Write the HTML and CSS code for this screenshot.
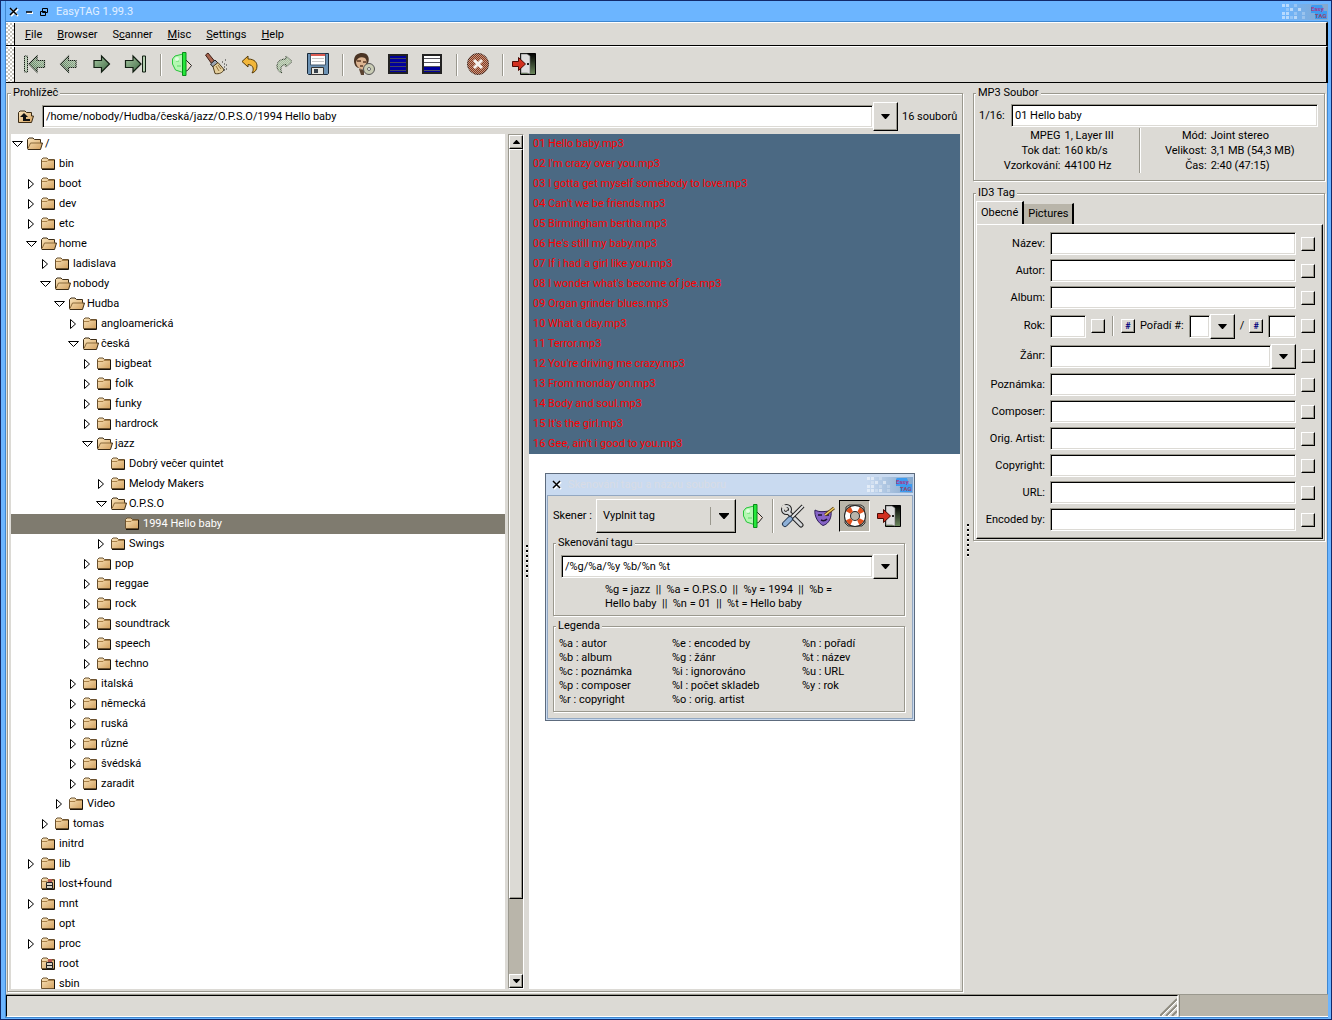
FILE: index.html
```html
<!DOCTYPE html>
<html lang="cs">
<head>
<meta charset="utf-8">
<title>EasyTAG 1.99.3</title>
<link rel="stylesheet" href="styles.css">
</head>
<body>
<svg class="defs" aria-hidden="true">
  <defs>
    <linearGradient id="g-folder" x1="0" y1="0" x2="1" y2="1"><stop offset="0" stop-color="#fbe6bd"/><stop offset="1" stop-color="#d3a15f"/></linearGradient>
    <linearGradient id="g-arrow" x1="0" y1="0" x2="1" y2="1"><stop offset="0" stop-color="#a9c9a4"/><stop offset="1" stop-color="#3f6b44"/></linearGradient>
    <linearGradient id="g-door" x1="0" y1="0" x2="0" y2="1"><stop offset="0" stop-color="#000"/><stop offset="1" stop-color="#6d8a5e"/></linearGradient>
    <pattern id="stipple" width="2" height="2" patternUnits="userSpaceOnUse"><path d="M0 0h1v1H0zM1 1h1v1H1z" fill="#dcdad5"/></pattern>
  </defs>
  <symbol id="i-closed" viewBox="0 0 16 16"><path d="M.5 12.500V3.500L2 2h4l1.500 1.500h6v9z" fill="url(#g-folder)" stroke="#6b5230"/><path d="M13.500 4v9.500H1" fill="none" stroke="#1c140a"/><path d="M1 5.500h5l1-1h6" fill="none" stroke="#a98048"/></symbol>
  <symbol id="i-open" viewBox="0 0 16 16"><path d="M.5 12.500V3.500L2 2h4l1.500 1.500h6V7h2l-2 6.500H1z" fill="url(#g-folder)" stroke="#3c2c16"/><path d="M1 12.500L3.500 7H14" fill="none" stroke="#8a6a3a"/></symbol>
  <symbol id="i-locked" viewBox="0 0 16 16"><use href="#i-closed"/><path d="M7 3h4v10H7z" fill="#b5564e"/><path d="M5.500 6.500h6v6h-6zM6 9.500h5" fill="#d9d4c8" stroke="#222"/></symbol>
  <symbol id="i-right" viewBox="0 0 16 16"><path d="M3.500 3.500v9L8.500 8z" fill="#fff" stroke="#000"/></symbol>
  <symbol id="i-down" viewBox="0 0 16 16"><path d="M1.500 5.500h10L6.500 10.500z" fill="#fff" stroke="#000"/></symbol>
  <symbol id="i-tri" viewBox="0 0 10 6"><path d="M0 0h10v1L5.500 6h-1L0 1z" fill="#000"/></symbol>
  <symbol id="i-arrow" viewBox="0 0 24 24"><path d="M4 8.500h7.500V4l8 8-8 8v-4.500H4z" fill="url(#g-arrow)" stroke="#111e12" stroke-width="1.200"/></symbol>
  <symbol id="i-end" viewBox="0 0 24 24"><path d="M1.500 8.500h7.500V4l8 8-8 8v-4.500H1.500z" fill="url(#g-arrow)" stroke="#111e12" stroke-width="1.200"/><path d="M18.500 4h3v16h-3z" fill="#b4cfb0" stroke="#111e12"/></symbol>
  <symbol id="i-scan" viewBox="0 0 24 24"><path d="M15 7l6.500 6.500-4 5-3 1z" fill="#f1ddd0" stroke="#222"/><path d="M13 2L5 4 2.500 7v5l3 6 7.500 2.500z" fill="#b4f7b2" stroke="#27c43a"/><path d="M6 9h3M7 14h4" stroke="#5bd866" fill="none"/><path d="M12.500.5h3.500v23h-3.500z" fill="#25e83a" stroke="#0b8a1b"/><circle cx="7" cy="7" r="2" fill="#e2ffe0"/></symbol>
  <symbol id="i-broom" viewBox="0 0 24 24"><path d="M1.500 3L4 1l6.500 8-3 2.500z" fill="#a8644e" stroke="#3d1d14"/><path d="M6.500 12l4.500-4 3 3-5 4z" fill="#9aa4b0" stroke="#222"/><path d="M9 14.500l5-4 6 7c-1 3-5 5-9 4z" fill="#e3cd9a" stroke="#4f3d1c"/><path d="M12 14l3 5M14 13l3 4" stroke="#94733c"/><path d="M18 10h1M20 12h1M21 8h1M20 15h1M22 17h1M19 18h2M22 13h1" stroke="#222"/></symbol>
  <symbol id="i-undo" viewBox="0 0 24 24"><path d="M4 9.500L10 4v3c7 0 9 4 9 7 0 4-2 6-5 7 2-3 2-8-4-8.500V15z" fill="#f2b63a" stroke="#553a06"/></symbol>
  <symbol id="i-redo" viewBox="0 0 24 24"><path d="M20 9.500L14 4v3c-7 0-9 4-9 7 0 4 2 6 5 7-2-3-2-8 4-8.500V15z" fill="#a9c2a0" stroke="#2c3c28"/></symbol>
  <symbol id="i-save" viewBox="0 0 24 24"><path d="M1.500 1.500h21v20l-1 1h-19l-1-1z" fill="#6d93b5" stroke="#182838"/><path d="M4.500 2h15v11h-15z" fill="#fff" stroke="#45596c"/><path d="M5 2h14v2H5z" fill="#db5b52"/><path d="M6 6.500h12M6 9.500h12" stroke="#c6c6c6"/><path d="M5.500 15.500h12v7h-12z" fill="#e6e6e0" stroke="#333"/><path d="M8 17h4v4H8z" fill="#38424c"/></symbol>
  <symbol id="i-face" viewBox="0 0 24 24"><path d="M2 9C2 3 6 1 10 1c6 0 8 5 6 10-2 6-6 8-9 5-3 0-5-4-5-7z" fill="#4a3424"/><path d="M4 10c1-4 5-6 9-4 3 3 1 8-2 11-3 1-7-3-7-7z" fill="#dcb491"/><path d="M5 9h4M11 10h3M8 14h3" stroke="#5c3a26" stroke-width="1.500"/><path d="M7 17l5 1v5H9z" fill="#5b4330"/><circle cx="17" cy="17" r="5.500" fill="#c9ccb4" stroke="#555"/><circle cx="17" cy="17" r="1.500" fill="#fff" stroke="#666"/></symbol>
  <symbol id="i-all" viewBox="0 0 24 24"><path d="M3 3h18v18H3z" fill="#00009c" stroke="#222" stroke-width="2"/><path d="M4 6.500h16M4 10.500h16M4 14.500h16M4 18.500h16" stroke="#45455e"/></symbol>
  <symbol id="i-invert" viewBox="0 0 24 24"><path d="M3 3h18v18H3z" fill="#fff" stroke="#222" stroke-width="2"/><path d="M4 14h16v6H4z" fill="#00009c"/><path d="M4 6.500h16M4 10.500h16M4 14.500h16M4 18.500h16" stroke="#55555e"/></symbol>
  <symbol id="i-stop" viewBox="0 0 24 24"><circle cx="12" cy="12" r="10.500" fill="#8e3818" stroke="#3d1c12"/><circle cx="12" cy="12" r="11" fill="url(#stipple)" opacity=".6"/><path d="M8 8l8 8M16 8l-8 8" stroke="#f4f0ec" stroke-width="3"/></symbol>
  <symbol id="i-exit" viewBox="0 0 24 24"><path d="M8.500 1.500h15v21h-15z" fill="url(#g-door)" stroke="#000"/><path d="M9 2h6l3 2v18l-3-1H9z" fill="#dedede" stroke="#666" stroke-width=".6"/><path d="M15 12h2" stroke="#222" stroke-width="2"/><path d="M.5 9.500h6V5.500l7 6.500-7 6.500v-4h-6z" fill="#d2301f" stroke="#4c0903"/></symbol>
  <symbol id="i-tools" viewBox="0 0 24 24"><path d="M7 8l13 13" stroke="#222" stroke-width="5" stroke-linecap="round"/><circle cx="5.500" cy="5.500" r="3.500" fill="none" stroke="#222" stroke-width="4"/><path d="M7 8l13 13" stroke="#d5d8da" stroke-width="3" stroke-linecap="round"/><circle cx="5.500" cy="5.500" r="3.500" fill="none" stroke="#d5d8da" stroke-width="2"/><path d="M0 3l3-3 4 5-2 2z" fill="#dcdad5"/><path d="M22 2L10 14" stroke="#222" stroke-width="4"/><path d="M22 2L10 14" stroke="#e6e6e6" stroke-width="2"/><path d="M9 15l-5 5" stroke="#23364f" stroke-width="6" stroke-linecap="round"/><path d="M9 15l-5 5" stroke="#8db0d8" stroke-width="4" stroke-linecap="round"/></symbol>
  <symbol id="i-mask" viewBox="0 0 24 24"><path d="M3 6c5 3 11 1 16 1 1 6-2 13-8 14.500C6 19 2 12 3 6z" fill="#8664c6" stroke="#2d1b57"/><path d="M6 11h4M13 11h4M9 16c2 1 4 1 6-1" stroke="#1c1030" stroke-width="1.500" fill="none"/><path d="M13 11L22 4" stroke="#5e4212" stroke-width="3"/><path d="M13 11L22 4" stroke="#f3cf62" stroke-width="1.500"/></symbol>
  <symbol id="i-help" viewBox="0 0 24 24"><path d="M3 3l3-2 12 0 3 2 1 16-3 3H5l-3-3z" fill="none" stroke="#333"/><circle cx="12" cy="12" r="7.500" fill="none" stroke="#222" stroke-width="7"/><circle cx="12" cy="12" r="7.500" fill="none" stroke="#fff" stroke-width="5"/><circle cx="12" cy="12" r="7.500" fill="none" stroke="#e2501c" stroke-width="5" stroke-dasharray="4.780 7" stroke-dashoffset="-3.500"/></symbol>
  <symbol id="i-up" viewBox="0 0 18 18"><path d="M1.500 14.500v-10L3 3h5l1.500 1.500h5V8h2l-2 6.500z" fill="url(#g-folder)" stroke="#3c2c16"/><path d="M7 5l4 4H9v2h4v2H6V9H3z" fill="#111"/></symbol>
  <symbol id="i-dots" viewBox="0 0 24 16"><path d="M0 0h3v3H0zM4 0h3v3H4zM8 4h3v3H8zM0 8h3v3H0zM4 8h3v3H4zM16 4h3v3h-3zM0 12h3v3H0zM4 12h3v3H4zM12 12h3v3h-3z" fill="#fff" opacity=".5"/><path d="M4 4h3v3H4zM12 8h3v3h-3zM8 12h3v3H8zM20 12h3v3h-3zM12 0h3v3h-3zM20 8h3v3h-3z" fill="#fff" opacity=".25"/></symbol>
</svg>

<div class="window">
  <header class="title">
    <svg width="40" height="10" viewBox="0 0 40 10" aria-hidden="true"><path d="M2 2l7 7M9 2L2 9M18 6h6" stroke="#fff" stroke-width="2"/><path d="M1 1l7 7M8 1L1 8M17 5h6" stroke="#000" stroke-width="1.500"/><path d="M33.500 1.500h5v4h-5zM31.500 4.500h5v4h-5z" fill="#6cb5ff" stroke="#000"/></svg>
    <span class="title-text">EasyTAG 1.99.3</span>
    <span class="title-end"><svg width="24" height="16"><use href="#i-dots"/></svg><svg class="logo" viewBox="0 0 18 16" aria-hidden="true"><path d="M2 1h10l2 6h3v8H5V9H1V2z" fill="#3d9bf0"/><text x="1" y="7" fill="#a83a8c">Easy</text><text x="5" y="14" fill="#8e4a72">TAG</text></svg></span>
  </header>

  <nav class="bar menu">
    <span class="grip"></span>
    <button><u>F</u>ile</button><button><u>B</u>rowser</button><button>S<u>c</u>anner</button><button><u>M</u>isc</button><button><u>S</u>ettings</button><button><u>H</u>elp</button>
  </nav>

  <div class="bar tools">
    <span class="grip"></span>
    <button class="tool off" aria-label="First"><svg class="flip"><use href="#i-end"/></svg></button>
    <button class="tool off" aria-label="Previous"><svg class="flip"><use href="#i-arrow"/></svg></button>
    <button class="tool" aria-label="Next"><svg><use href="#i-arrow"/></svg></button>
    <button class="tool" aria-label="Last"><svg><use href="#i-end"/></svg></button>
    <span class="sep"></span>
    <button class="tool" aria-label="Scan"><svg><use href="#i-scan"/></svg></button>
    <button class="tool" aria-label="Clear"><svg><use href="#i-broom"/></svg></button>
    <button class="tool" aria-label="Undo"><svg><use href="#i-undo"/></svg></button>
    <button class="tool off" aria-label="Redo"><svg><use href="#i-redo"/></svg></button>
    <button class="tool" aria-label="Save"><svg><use href="#i-save"/></svg></button>
    <span class="sep"></span>
    <button class="tool" aria-label="Artist and album view"><svg><use href="#i-face"/></svg></button>
    <button class="tool" aria-label="Select all"><svg><use href="#i-all"/></svg></button>
    <button class="tool" aria-label="Invert selection"><svg><use href="#i-invert"/></svg></button>
    <span class="sep"></span>
    <button class="tool" aria-label="Stop"><svg><use href="#i-stop"/></svg></button>
    <span class="sep"></span>
    <button class="tool" aria-label="Quit"><svg><use href="#i-exit"/></svg></button>
  </div>

  <main class="content">
    <fieldset class="frame browser">
      <legend>Prohlížeč</legend>
      <div class="path">
        <button class="plain" aria-label="Parent folder"><svg width="18" height="18"><use href="#i-up"/></svg></button>
        <input class="entry grow" aria-label="Path" value="/home/nobody/Hudba/česká/jazz/O.P.S.O/1994 Hello baby">
        <button class="drop tall" aria-label="Recent folders"><svg><use href="#i-tri"/></svg></button>
        <span class="count">16 souborů</span>
      </div>
      <div class="panes">
        <ul class="tree">
          <li class="l0"><svg><use href="#i-down"/></svg><svg><use href="#i-open"/></svg>/</li>
          <li class="l1"><svg></svg><svg><use href="#i-closed"/></svg>bin</li>
          <li class="l1"><svg><use href="#i-right"/></svg><svg><use href="#i-closed"/></svg>boot</li>
          <li class="l1"><svg><use href="#i-right"/></svg><svg><use href="#i-closed"/></svg>dev</li>
          <li class="l1"><svg><use href="#i-right"/></svg><svg><use href="#i-closed"/></svg>etc</li>
          <li class="l1"><svg><use href="#i-down"/></svg><svg><use href="#i-open"/></svg>home</li>
          <li class="l2"><svg><use href="#i-right"/></svg><svg><use href="#i-closed"/></svg>ladislava</li>
          <li class="l2"><svg><use href="#i-down"/></svg><svg><use href="#i-open"/></svg>nobody</li>
          <li class="l3"><svg><use href="#i-down"/></svg><svg><use href="#i-open"/></svg>Hudba</li>
          <li class="l4"><svg><use href="#i-right"/></svg><svg><use href="#i-closed"/></svg>angloamerická</li>
          <li class="l4"><svg><use href="#i-down"/></svg><svg><use href="#i-open"/></svg>česká</li>
          <li class="l5"><svg><use href="#i-right"/></svg><svg><use href="#i-closed"/></svg>bigbeat</li>
          <li class="l5"><svg><use href="#i-right"/></svg><svg><use href="#i-closed"/></svg>folk</li>
          <li class="l5"><svg><use href="#i-right"/></svg><svg><use href="#i-closed"/></svg>funky</li>
          <li class="l5"><svg><use href="#i-right"/></svg><svg><use href="#i-closed"/></svg>hardrock</li>
          <li class="l5"><svg><use href="#i-down"/></svg><svg><use href="#i-open"/></svg>jazz</li>
          <li class="l6"><svg></svg><svg><use href="#i-closed"/></svg>Dobrý večer quintet</li>
          <li class="l6"><svg><use href="#i-right"/></svg><svg><use href="#i-closed"/></svg>Melody Makers</li>
          <li class="l6"><svg><use href="#i-down"/></svg><svg><use href="#i-open"/></svg>O.P.S.O</li>
          <li class="l7 selected"><svg></svg><svg><use href="#i-closed"/></svg>1994 Hello baby</li>
          <li class="l6"><svg><use href="#i-right"/></svg><svg><use href="#i-closed"/></svg>Swings</li>
          <li class="l5"><svg><use href="#i-right"/></svg><svg><use href="#i-closed"/></svg>pop</li>
          <li class="l5"><svg><use href="#i-right"/></svg><svg><use href="#i-closed"/></svg>reggae</li>
          <li class="l5"><svg><use href="#i-right"/></svg><svg><use href="#i-closed"/></svg>rock</li>
          <li class="l5"><svg><use href="#i-right"/></svg><svg><use href="#i-closed"/></svg>soundtrack</li>
          <li class="l5"><svg><use href="#i-right"/></svg><svg><use href="#i-closed"/></svg>speech</li>
          <li class="l5"><svg><use href="#i-right"/></svg><svg><use href="#i-closed"/></svg>techno</li>
          <li class="l4"><svg><use href="#i-right"/></svg><svg><use href="#i-closed"/></svg>italská</li>
          <li class="l4"><svg><use href="#i-right"/></svg><svg><use href="#i-closed"/></svg>německá</li>
          <li class="l4"><svg><use href="#i-right"/></svg><svg><use href="#i-closed"/></svg>ruská</li>
          <li class="l4"><svg><use href="#i-right"/></svg><svg><use href="#i-closed"/></svg>různé</li>
          <li class="l4"><svg><use href="#i-right"/></svg><svg><use href="#i-closed"/></svg>švédská</li>
          <li class="l4"><svg><use href="#i-right"/></svg><svg><use href="#i-closed"/></svg>zaradit</li>
          <li class="l3"><svg><use href="#i-right"/></svg><svg><use href="#i-closed"/></svg>Video</li>
          <li class="l2"><svg><use href="#i-right"/></svg><svg><use href="#i-closed"/></svg>tomas</li>
          <li class="l1"><svg></svg><svg><use href="#i-closed"/></svg>initrd</li>
          <li class="l1"><svg><use href="#i-right"/></svg><svg><use href="#i-closed"/></svg>lib</li>
          <li class="l1"><svg></svg><svg><use href="#i-locked"/></svg>lost+found</li>
          <li class="l1"><svg><use href="#i-right"/></svg><svg><use href="#i-closed"/></svg>mnt</li>
          <li class="l1"><svg></svg><svg><use href="#i-closed"/></svg>opt</li>
          <li class="l1"><svg><use href="#i-right"/></svg><svg><use href="#i-closed"/></svg>proc</li>
          <li class="l1"><svg></svg><svg><use href="#i-locked"/></svg>root</li>
          <li class="l1"><svg></svg><svg><use href="#i-closed"/></svg>sbin</li>
        </ul>
        <div class="scroll">
          <button aria-label="Scroll up"><svg class="turn"><use href="#i-tri"/></svg></button>
          <span class="thumb"></span>
          <span class="trough"></span>
          <button aria-label="Scroll down"><svg><use href="#i-tri"/></svg></button>
        </div>
        <div class="splitter inner"></div>
        <div class="files">
          <ol>
            <li>01 Hello baby.mp3</li><li>02 I'm crazy over you.mp3</li><li>03 I gotta get myself somebody to love.mp3</li><li>04 Can't we be friends.mp3</li><li>05 Birmingham bertha.mp3</li><li>06 He's still my baby.mp3</li><li>07 If i had a girl like you.mp3</li><li>08 I wonder what's become of joe.mp3</li><li>09 Organ grinder blues.mp3</li><li>10 What a day.mp3</li><li>11 Terror.mp3</li><li>12 You're driving me crazy.mp3</li><li>13 From monday on.mp3</li><li>14 Body and soul.mp3</li><li>15 It's the girl.mp3</li><li>16 Gee, ain't i good to you.mp3</li>
          </ol>
          <section class="dialog" aria-label="Skenování tagu a názvu souboru">
            <header class="dialog-title">
              <svg width="10" height="10" viewBox="0 0 10 10" aria-hidden="true"><path d="M2 2l7 7M9 2L2 9" stroke="#fff" stroke-width="2"/><path d="M1 1l7 7M8 1L1 8" stroke="#000" stroke-width="1.500"/></svg>
              <span class="dialog-name">Skenování tagu a názvu souboru</span>
              <span class="title-end"><svg width="24" height="16"><use href="#i-dots"/></svg><svg class="logo" viewBox="0 0 18 16" aria-hidden="true"><path d="M2 1h10l2 6h3v8H5V9H1V2z" fill="#3d9bf0"/><text x="1" y="7" fill="#a83a8c">Easy</text><text x="5" y="14" fill="#8e4a72">TAG</text></svg></span>
            </header>
            <div class="dialog-body">
              <div class="scanner">
                <span class="scanner-label">Skener :</span>
                <button class="combo"><span>Vyplnit tag</span><svg><use href="#i-tri"/></svg></button>
                <button class="tool" aria-label="Scan"><svg><use href="#i-scan"/></svg></button>
                <span class="rule"></span>
                <button class="tool" aria-label="Options"><svg><use href="#i-tools"/></svg></button>
                <button class="tool" aria-label="Mask editor"><svg><use href="#i-mask"/></svg></button>
                <button class="tool pressed" aria-label="Legend"><svg><use href="#i-help"/></svg></button>
                <button class="tool last" aria-label="Close"><svg><use href="#i-exit"/></svg></button>
              </div>
              <fieldset class="frame scan">
                <legend>Skenování tagu</legend>
                <div class="mask">
                  <input class="entry grow" aria-label="Mask" value="/%g/%a/%y %b/%n %t">
                  <button class="drop" aria-label="Masks"><svg><use href="#i-tri"/></svg></button>
                </div>
                <p>%g = jazz &nbsp;|| &nbsp;%a = O.P.S.O &nbsp;|| &nbsp;%y = 1994 &nbsp;|| &nbsp;%b =<br>Hello baby &nbsp;|| &nbsp;%n = 01 &nbsp;|| &nbsp;%t = Hello baby</p>
              </fieldset>
              <fieldset class="frame legend">
                <legend>Legenda</legend>
                <div class="codes">
                  <div>%a : autor<br>%b : album<br>%c : poznámka<br>%p : composer<br>%r : copyright</div>
                  <div>%e : encoded by<br>%g : žánr<br>%i : ignorováno<br>%l : počet skladeb<br>%o : orig. artist</div>
                  <div>%n : pořadí<br>%t : název<br>%u : URL<br>%y : rok</div>
                </div>
              </fieldset>
            </div>
          </section>
        </div>
      </div>
    </fieldset>

    <div class="splitter"></div>

    <aside class="side">
      <fieldset class="frame">
        <legend>MP3 Soubor</legend>
        <div class="file-row">
          <label for="fname">1/16:</label>
          <input class="entry grow" id="fname" value="01 Hello baby">
        </div>
        <div class="info">
          <dl><dt>MPEG</dt><dd>1, Layer III</dd><dt>Tok dat:</dt><dd>160 kb/s</dd><dt>Vzorkování:</dt><dd>44100 Hz</dd></dl>
          <span class="rule"></span>
          <dl class="wide"><dt>Mód:</dt><dd>Joint stereo</dd><dt>Velikost:</dt><dd>3,1 MB (54,3 MB)</dd><dt>Čas:</dt><dd>2:40 (47:15)</dd></dl>
        </div>
      </fieldset>

      <fieldset class="frame tag">
        <legend>ID3 Tag</legend>
        <div class="tabs"><button class="tab current">Obecné</button><button class="tab">Pictures</button></div>
        <div class="form">
          <div class="row"><label for="t1">Název:</label><input class="entry grow" id="t1"><button class="mini" aria-label="Apply Název"></button></div>
          <div class="row"><label for="t2">Autor:</label><input class="entry grow" id="t2"><button class="mini" aria-label="Apply Autor"></button></div>
          <div class="row"><label for="t3">Album:</label><input class="entry grow" id="t3"><button class="mini" aria-label="Apply Album"></button></div>
          <div class="row high">
            <label for="t4">Rok:</label><input class="entry year" id="t4"><button class="mini" aria-label="Apply Rok"></button>
            <span class="rule"></span>
            <button class="mini" aria-label="Number tracks">#</button>
            <label class="track" for="t5">Pořadí #:</label>
            <span class="joined"><input class="entry num" id="t5"><button class="drop" aria-label="Tracks"><svg><use href="#i-tri"/></svg></button></span>
            <span>/</span><button class="mini" aria-label="Count tracks">#</button>
            <input class="entry grow" aria-label="Total"><button class="mini" aria-label="Apply Pořadí"></button>
          </div>
          <div class="row high"><label for="t6">Žánr:</label><span class="joined grow"><input class="entry grow" id="t6"><button class="drop" aria-label="Genres"><svg><use href="#i-tri"/></svg></button></span><button class="mini" aria-label="Apply Žánr"></button></div>
          <div class="row"><label for="t7">Poznámka:</label><input class="entry grow" id="t7"><button class="mini" aria-label="Apply Poznámka"></button></div>
          <div class="row"><label for="t8">Composer:</label><input class="entry grow" id="t8"><button class="mini" aria-label="Apply Composer"></button></div>
          <div class="row"><label for="t9">Orig. Artist:</label><input class="entry grow" id="t9"><button class="mini" aria-label="Apply Orig. Artist"></button></div>
          <div class="row"><label for="t10">Copyright:</label><input class="entry grow" id="t10"><button class="mini" aria-label="Apply Copyright"></button></div>
          <div class="row"><label for="t11">URL:</label><input class="entry grow" id="t11"><button class="mini" aria-label="Apply URL"></button></div>
          <div class="row"><label for="t12">Encoded by:</label><input class="entry grow" id="t12"><button class="mini" aria-label="Apply Encoded by"></button></div>
        </div>
      </fieldset>
    </aside>
  </main>

  <footer class="status">
    <span class="message"><svg width="17" height="18" viewBox="0 0 17 18" aria-hidden="true"><path d="M0 18L17 1M6 18L17 7M12 18l5-5" stroke="#8e8b80" stroke-width="2"/><path d="M2 18L17 3M8 18l9-9" stroke="#fff"/></svg></span>
    <span class="progress"></span>
  </footer>
</div>
</body>
</html>
```
FILE: styles.css
```css
:root {
  --bg: #dcdad5;
  --dark: #9a988e;
  --trough: #b9b5aa;
  --blue: #6cb5ff;
}
* { box-sizing: border-box; }
body {
  margin: 0;
  font: 11px/14px Roboto, "Liberation Sans", sans-serif;
  color: #000;
  background: var(--bg);
}
button, input { font: inherit; color: inherit; margin: 0; padding: 0; border-radius: 0; }
button { background: none; border: 0; }
ul, ol, dl, dd, p { margin: 0; padding: 0; list-style: none; }
.defs { position: absolute; width: 0; height: 0; }
.grow { flex: 1; min-width: 0; }

.window {
  display: flex;
  flex-direction: column;
  height: 100vh;
  border: solid var(--blue);
  border-width: 0 4px 2px 5px;
  box-shadow: inset 1px 0 #3f87d0, inset -1px -1px #3f87d0;
  outline: 1px solid #12296b;
  outline-offset: -1px;
  padding: 0 0 1px 1px;
}
.title {
  display: flex;
  align-items: center;
  flex: none;
  height: 22px;
  padding: 2px 0 0 3px;
  background: var(--blue);
  border-top: 1px solid #c4e2ff;
  border-bottom: 1px solid #3f87d0;
}
.title-text { margin-left: 7px; color: #e2f0ff; }
.title-end { display: flex; align-items: center; gap: 4px; margin-left: auto; height: 16px; background: linear-gradient(90deg, transparent, #86a8cc); }
.logo { width: 18px; height: 16px; overflow: visible; font-size: 6px; font-weight: 700; }

.bar {
  display: flex;
  align-items: stretch;
  flex: none;
  border-top: 1px solid #fff;
  border-bottom: 1px solid #000;
  border-right: 2px solid #000;
}
.grip {
  width: 9px;
  margin-right: 2px;
  border-right: 1px solid #000;
  background: repeating-conic-gradient(#fff 0 25%, #c8c5bd 0 50%) 0 0 / 4px 4px;
}
.menu { height: 24px; gap: 1px; }
.menu button { padding: 1px 7px 0; }
.tools { height: 37px; }
.tool { display: grid; place-items: center; width: 34px; }
.tool svg { width: 24px; height: 24px; }
.tools .tool { padding-bottom: 1px; }
.off svg {
  -webkit-mask: repeating-conic-gradient(#000 0 25%, rgba(0, 0, 0, .35) 0 50%) 0 0 / 2px 2px;
  mask: repeating-conic-gradient(#000 0 25%, rgba(0, 0, 0, .35) 0 50%) 0 0 / 2px 2px;
}
.flip { transform: scaleX(-1); }
.turn { transform: rotate(180deg); }
.sep { width: 12px; background: linear-gradient(90deg, var(--dark) 50%, #fff 50%) 7px 50% / 2px 22px no-repeat; }

.content { flex: 1; min-height: 0; display: flex; padding: 3px 3px 0 1px; }
.frame {
  min-width: 0;
  margin: 0;
  padding: 0;
  border: 1px solid var(--dark);
  box-shadow: 1px 1px 0 #fff, inset 1px 1px 0 #fff;
}
.frame > legend { margin-left: 2px; padding: 0 2px; background: var(--bg); height: 14px; }
.browser { flex: 1; display: flex; flex-direction: column; padding: 2px 2px 2px 3px; margin-bottom: 2px; }
.browser > legend, .tag > legend { margin-left: 0; }
.path { display: flex; align-items: center; height: 29px; margin-bottom: 3px; padding-left: 6px; }
.plain { display: grid; margin-right: 7px; }
.count { margin-left: 4px; width: 58px; }
.entry {
  height: 23px;
  padding: 0 3px;
  background: #fff;
  border: 1px solid;
  border-color: var(--dark) #fff #fff var(--dark);
  box-shadow: inset 1px 1px #000, inset -1px -1px var(--bg);
  outline: 0;
}
.drop, .mini, .combo, .scroll button, .thumb {
  background: var(--bg);
  border: 1px solid;
  border-color: #fff #000 #000 #fff;
  box-shadow: inset -1px -1px var(--dark);
}
.drop { display: grid; place-items: center; width: 25px; height: 25px; }
.drop svg, .combo svg { width: 9px; height: 5px; }
.tall { height: 29px; }

.panes { flex: 1; min-height: 0; display: flex; }
.tree { flex: 494 1 0; overflow: hidden; background: #fff; margin-right: 3px; }
.tree li { display: flex; align-items: center; height: 20px; }
.tree svg { width: 16px; height: 16px; flex: none; }
.tree svg + svg { margin-right: 2px; }
.l1 { padding-left: 14px; }
.l2 { padding-left: 28px; }
.l3 { padding-left: 42px; }
.l4 { padding-left: 56px; }
.l5 { padding-left: 70px; }
.l6 { padding-left: 84px; }
.l7 { padding-left: 98px; }
.selected { background: #7f7b6f; color: #fff; }
.scroll {
  display: flex;
  flex-direction: column;
  width: 16px;
  background: var(--trough);
  border: 1px solid;
  border-color: var(--dark) #fff #fff var(--dark);
}
.scroll button { height: 14px; display: grid; place-items: center; }
.scroll svg { width: 7px; height: 4px; }
.thumb { flex: 751 1 0; }
.trough { flex: 75 1 0; }
.splitter {
  width: 10px;
  background: repeating-linear-gradient(#000 0 2px, #fff 2px 3px, var(--bg) 3px 5px) 4px 50% / 2px 33px no-repeat;
}
.inner { width: 5px; background-position: 2px 50%; }
.files { flex: 431 1 0; position: relative; background: #fff; }
.files ol { background: #4b6983; color: #f00; }
.files li { height: 20px; line-height: 20px; padding-left: 4px; }

.dialog {
  position: absolute;
  left: 16px;
  top: 339px;
  width: 370px;
  background: var(--bg);
  border: 2px solid #c9daf0;
  outline: 1px solid #5d6b7d;
  outline-offset: -1px;
}
.dialog-title { display: flex; align-items: center; height: 20px; padding-left: 5px; background: #c9daf0; }
.dialog-name { margin-left: 6px; color: #d8dce5; }
.dialog-body { padding: 3px 7px 6px 5px; border: 1px solid #93a8c2; }
.scanner { display: flex; align-items: center; height: 34px; }
.scanner-label { width: 43px; }
.combo { display: flex; align-items: center; justify-content: space-between; width: 140px; height: 34px; padding: 0 6px; }
.combo svg { width: 19px; padding-left: 8px; border-left: 1px solid var(--dark); height: 18px; }
.rule { width: 2px; background: linear-gradient(90deg, var(--dark) 50%, #fff 50%); align-self: stretch; }
.scanner .tool { width: 31px; height: 32px; }
.scanner .combo + .tool { width: 34px; }
.scanner .rule { margin: 0 3px 0 2px; }
.scanner .last { margin-left: 3px; }
.pressed { background: var(--trough); border: 1px solid; border-color: #000 #fff #fff #000; }
.scan { margin-top: 3px; padding: 4px 0; }
.mask { display: flex; align-items: center; padding: 0 6px 0 7px; }
.scan p { padding: 4px 0 0 51px; white-space: nowrap; }
.legend { margin-top: 3px; padding: 4px 0; }
.codes { display: grid; grid-template-columns: 113px 130px 1fr; padding: 0 5px; }

.side { flex: 0 0 352px; min-width: 0; display: flex; flex-direction: column; gap: 5px; }
.file-row { display: flex; align-items: center; gap: 4px; padding: 4px 6px 0 5px; }
.file-row label { width: 28px; }
.info { display: flex; padding: 1px 5px 7px; }
.info dl { flex: 160 1 0; display: grid; grid-template-columns: auto auto; justify-content: center; column-gap: 4px; line-height: 15px; }
.info .wide { flex-grow: 179; }
.info dt { text-align: right; }
.tag { padding: 1px 1px 1px 2px; }
.tabs { display: flex; align-items: flex-end; }
.tab { height: 21px; padding: 0 4px; background: var(--trough); border: solid; border-width: 1px 2px 0 0; border-color: var(--bg) #000 #000; }
.current { height: 23px; background: var(--bg); border-width: 1px 2px 0 1px; border-color: #fff #000 #000 #fff; }
.form {
  display: flex;
  flex-direction: column;
  gap: 4px;
  padding: 7px 7px 7px 8px;
  border: 1px solid;
  border-color: #fff #000 #000 #fff;
  box-shadow: inset -1px -1px var(--dark);
}
.row { display: flex; align-items: center; gap: 5px; }
.row > label:first-child { width: 60px; text-align: right; }
.high { min-height: 26px; }
.row .rule { height: 20px; align-self: center; margin: 0 2px; }
.joined { display: flex; align-items: center; }
.mini { width: 14px; height: 14px; font-size: 9px; line-height: 10px; color: #00007c; font-weight: 700; text-align: center; }
.year { width: 36px; }
.num { width: 21px; }

.status { display: flex; flex: none; height: 23px; border-top: 1px solid var(--dark); }
.message { flex: 1; display: flex; justify-content: flex-end; align-items: flex-end; border: 1px solid; border-color: #000 #fff #fff #000; }
.progress { width: 149px; margin-left: 1px; background: var(--trough); border-left: 1px solid #88857a; border-bottom: 1px solid #fff; }
```
